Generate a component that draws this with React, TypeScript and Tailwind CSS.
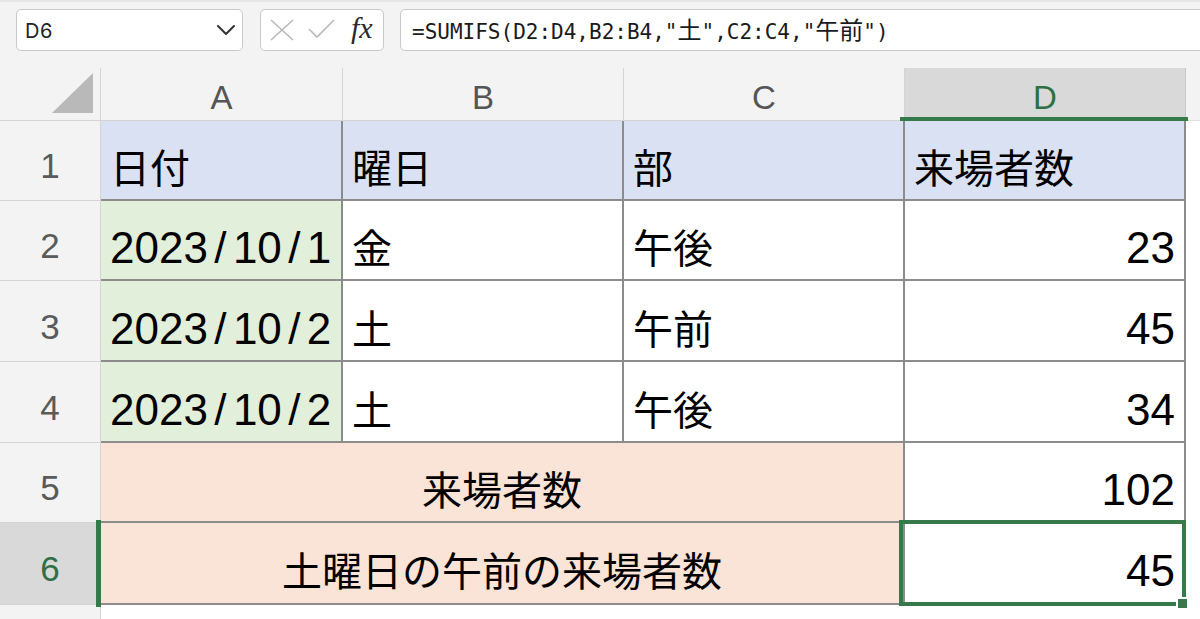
import React from "react";

const CJK = { fontFamily: '"Noto Sans CJK JP", "Noto Sans", sans-serif' };
const NUM = { fontFamily: '"Liberation Sans", Arial, sans-serif' };

function RowHeader({ n, h, selected }: { n: number; h: string; selected?: boolean }) {
  return (
    <div
      className={
        selected
          ? "relative w-[101px] shrink-0 flex items-center justify-center pt-[10px] bg-[#d9d9d9] text-[#2e7045] text-[35px] leading-none border-r border-b border-[#d4d4d4] " + h
          : "relative w-[101px] shrink-0 flex items-center justify-center pt-[10px] bg-[#f3f3f3] text-[#5a5a5a] text-[35px] leading-none border-r border-b border-[#d4d4d4] " + h
      }
      style={NUM}
    >
      {n}
      {selected && <div className="absolute right-[-1px] top-[-3px] bottom-[-3px] w-[5px] bg-[#367a4c]" />}
    </div>
  );
}

function Cell({
  w,
  bg,
  children,
  align = "left",
  num,
  relative,
  extra,
}: {
  w: string;
  bg: string;
  children?: React.ReactNode;
  align?: "left" | "right" | "center";
  num?: boolean;
  relative?: boolean;
  extra?: React.ReactNode;
}) {
  const justify = align === "left" ? "justify-start pl-[9px]" : align === "right" ? "justify-end pr-[9px]" : "justify-center";
  return (
    <div
      className={`${w} ${bg} ${justify} ${relative ? "relative" : ""} shrink-0 h-full flex items-center border-r-2 border-b-2 border-[#8c8c8c] text-black leading-none whitespace-nowrap ${num ? "text-[44px] pt-[16px]" : "text-[40px] pt-[12px]"}`}
      style={num ? NUM : CJK}
    >
      {children}
      {extra}
    </div>
  );
}

function DateText({ s }: { s: string }) {
  const parts = s.split("/");
  return (
    <span className="flex items-center">
      {parts.map((p, i) => (
        <React.Fragment key={i}>
          {i > 0 && <span className="inline-block w-[25px] text-center">/</span>}
          <span>{p}</span>
        </React.Fragment>
      ))}
    </span>
  );
}

export default function App() {
  const rows: { h: string; date: string; day: string; part: string; v: string }[] = [
    { h: "h-[80px]", date: "2023/10/1", day: "金", part: "午後", v: "23" },
    { h: "h-[81px]", date: "2023/10/2", day: "土", part: "午前", v: "45" },
    { h: "h-[81px]", date: "2023/10/2", day: "土", part: "午後", v: "34" },
  ];
  const cj = "text-[24px]";
  return (
    <div className="w-[1200px] h-[619px] overflow-hidden bg-white flex flex-col">
      {/* Toolbar */}
      <div className="h-[68px] shrink-0 bg-[#f3f3f3] flex items-start pt-[7px] pl-[16px] border-t-2 border-[#e6e6e6] overflow-hidden">
        <div className="w-[227px] h-[42px] shrink-0 bg-white border border-[#c9c9c9] rounded-[5px] flex items-center pl-[8px] pr-[6px] justify-between">
          <span className="text-[20px] text-[#222] tracking-[0.5px] mt-[2px]" style={{ fontFamily: '"Inter", "Liberation Sans", sans-serif' }}>
            D6
          </span>
          <svg width="20" height="12" viewBox="0 0 20 12">
            <path d="M2 2 L10 10 L18 2" fill="none" stroke="#333" strokeWidth="2" strokeLinecap="round" strokeLinejoin="round" />
          </svg>
        </div>
        <div className="ml-[17px] w-[124px] h-[42px] shrink-0 bg-white border border-[#c9c9c9] rounded-[5px] flex items-center pl-[9px]">
          <svg width="24" height="22" viewBox="0 0 24 22">
            <path d="M1 1 L23 21 M23 1 L1 21" stroke="#b8b8b8" strokeWidth="1.6" fill="none" />
          </svg>
          <svg width="27" height="20" viewBox="0 0 27 20" className="ml-[14px] mt-[-3px]">
            <path d="M1 10 L9 18 L26 1" stroke="#b8b8b8" strokeWidth="1.6" fill="none" />
          </svg>
          <span
            className="ml-[16px] text-[30px] italic text-[#2a2a2a] leading-none mt-[-4px]"
            style={{ fontFamily: '"Liberation Serif", "DejaVu Serif", serif' }}
          >
            fx
          </span>
        </div>
        <div className="ml-[16px] w-[830px] h-[42px] shrink-0 bg-white border border-[#c9c9c9] rounded-[5px] flex items-center pl-[11px]">
          <span
            className="text-[21px] text-[#1a1a1a] whitespace-nowrap"
            style={{ fontFamily: '"DejaVu Sans Mono", "Noto Sans CJK JP", monospace' }}
          >
            =SUMIFS(D2:D4,B2:B4,"<span className={cj} style={CJK}>土</span>",C2:C4,"
            <span className={cj} style={CJK}>午前</span>")
          </span>
        </div>
      </div>

      {/* Column headers */}
      <div className="h-[53px] shrink-0 flex bg-[#f3f3f3]" style={NUM}>
        <div className="w-[101px] shrink-0 h-full border-r border-b border-[#d4d4d4] relative">
          <svg width="100" height="52" viewBox="0 0 100 52" className="absolute left-0 top-0">
            <polygon points="93,5 93,45 52,45" fill="#b9b9b9" />
          </svg>
        </div>
        <div className="w-[242px] shrink-0 h-full flex items-center justify-center pt-[6px] text-[33px] leading-none text-[#555] border-r border-b border-[#d4d4d4]">A</div>
        <div className="w-[281px] shrink-0 h-full flex items-center justify-center pt-[6px] text-[33px] leading-none text-[#555] border-r border-b border-[#d4d4d4]">B</div>
        <div className="w-[281px] shrink-0 h-full flex items-center justify-center pt-[6px] text-[33px] leading-none text-[#555] border-r border-b border-[#d4d4d4]">C</div>
        <div className="relative w-[281px] shrink-0 h-full flex items-center justify-center pt-[6px] text-[33px] leading-none text-[#2e7045] bg-[#d9d9d9] border-r border-[#c8c8c8]">
          D
          <div className="absolute left-[-5px] right-[-3px] bottom-0 h-[4px] bg-[#367a4c]" />
        </div>
        <div className="flex-1 h-full border-b border-[#e0e0e0]" />
      </div>

      {/* Row 1 */}
      <div className="h-[80px] shrink-0 flex">
        <RowHeader n={1} h="h-[80px]" />
        <Cell w="w-[242px]" bg="bg-[#d9e1f2]">日付</Cell>
        <Cell w="w-[281px]" bg="bg-[#d9e1f2]">曜日</Cell>
        <Cell w="w-[281px]" bg="bg-[#d9e1f2]">部</Cell>
        <Cell w="w-[281px]" bg="bg-[#d9e1f2]">来場者数</Cell>
        <div className="flex-1" />
      </div>

      {rows.map((r, i) => (
        <div key={i} className={`${r.h} shrink-0 flex`}>
          <RowHeader n={i + 2} h={r.h} />
          <Cell w="w-[242px]" bg="bg-[#e2efda]" num>
            <DateText s={r.date} />
          </Cell>
          <Cell w="w-[281px]" bg="bg-white">{r.day}</Cell>
          <Cell w="w-[281px]" bg="bg-white">{r.part}</Cell>
          <Cell w="w-[281px]" bg="bg-white" align="right" num>
            {r.v}
          </Cell>
          <div className="flex-1" />
        </div>
      ))}

      {/* Row 5 */}
      <div className="h-[80px] shrink-0 flex">
        <RowHeader n={5} h="h-[80px]" />
        <Cell w="w-[804px]" bg="bg-[#f9e4d7]" align="center">来場者数</Cell>
        <Cell w="w-[281px]" bg="bg-white" align="right" num>
          102
        </Cell>
        <div className="flex-1" />
      </div>

      {/* Row 6 */}
      <div className="h-[82px] shrink-0 flex">
        <RowHeader n={6} h="h-[82px]" selected />
        <Cell w="w-[804px]" bg="bg-[#f9e4d7]" align="center">土曜日の午前の来場者数</Cell>
        <Cell
          w="w-[281px]"
          bg="bg-white"
          align="right"
          num
          relative
          extra={
            <>
              <div className="absolute left-[-6px] top-[-3px] right-[-2px] bottom-[-3px] border-[4px] border-[#367a4c]" />
              <div className="absolute right-[-5px] bottom-[-7px] w-[13px] h-[13px] bg-[#367a4c] border-2 border-white" />
            </>
          }
        >
          45
        </Cell>
        <div className="flex-1" />
      </div>

      {/* Below */}
      <div className="flex-1 flex">
        <div className="w-[101px] shrink-0 bg-[#f3f3f3] border-r border-[#d4d4d4]" />
        <div className="flex-1 bg-white" />
      </div>
    </div>
  );
}
